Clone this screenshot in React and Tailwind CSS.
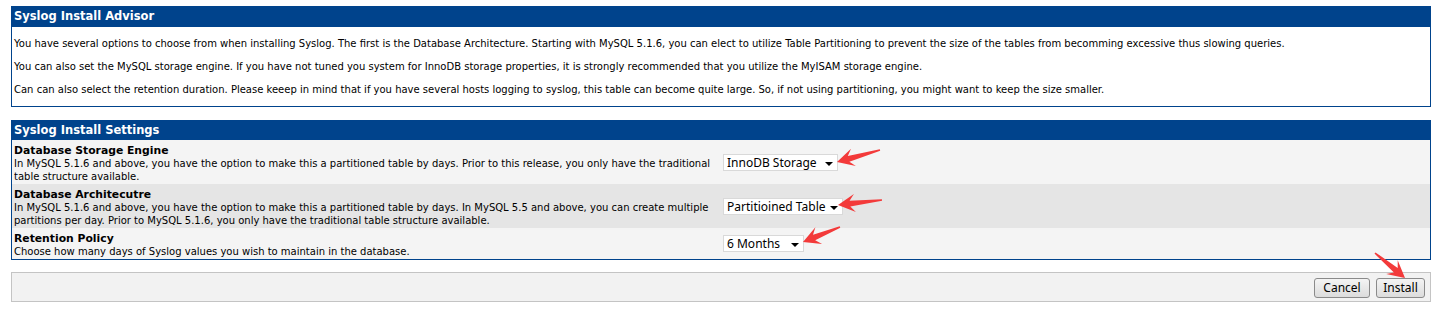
import React from 'react'

const arrowPoints = (x1, y1, x2, y2) => {
  const dx = x2 - x1
  const dy = y2 - y1
  const len = Math.hypot(dx, dy)
  const ux = dx / len
  const uy = dy / len
  const nx = -uy
  const ny = ux
  const head = 15
  const hw = 9
  const sw = 3
  const bx = x2 - ux * head
  const by = y2 - uy * head
  const pts = [
    [x1 + nx * 0.8, y1 + ny * 0.8],
    [bx + ux * 3 + nx * sw, by + uy * 3 + ny * sw],
    [bx - ux * 2 + nx * hw, by - uy * 2 + ny * hw],
    [x2, y2],
    [bx - ux * 2 - nx * hw, by - uy * 2 - ny * hw],
    [bx + ux * 3 - nx * sw, by + uy * 3 - ny * sw],
    [x1 - nx * 0.8, y1 - ny * 0.8],
  ]
  return pts.map((p) => p[0].toFixed(1) + ',' + p[1].toFixed(1)).join(' ')
}

const FakeSelect = ({ label, width }) => (
  <div
    className={`${width} h-[17px] bg-white border border-[#d9d9d9] flex items-center justify-between pl-[3px] pr-[4px] font-['Noto_Sans'] text-[12px] leading-none text-black`}
  >
    <span className="mt-px">{label}</span>
    <span className="w-0 h-0 border-l-[4px] border-r-[4px] border-t-[4px] border-l-transparent border-r-transparent border-t-black mt-[3px]"></span>
  </div>
)

const SettingRow = ({ title, lines, shade, children }) => (
  <div className={`flex ${shade}`}>
    <div className="w-1/2 pl-[2px] pt-[4px] pb-px leading-[13px] text-black">
      <div className="font-bold text-[10.8px]">{title}</div>
      {lines.map((l, i) => (
        <div key={i} className="whitespace-nowrap">{l}</div>
      ))}
    </div>
    <div className="w-1/2 pl-[2px] flex items-center">{children}</div>
  </div>
)

export default function App() {
  return (
    <div className="relative w-[1447px] h-[311px] bg-white font-['DejaVu_Sans'] text-[10px] text-black overflow-hidden">
      <div className="pt-[6px] pl-[11px] w-[1431px]">
        {/* advisor */}
        <div className="border border-[#00438c]">
          <div className="h-[20px] bg-[#00438c] text-white font-bold text-[11.5px] flex items-center pl-[2px]">
            Syslog Install Advisor
          </div>
          <div className="pl-[2px] pt-[10px] pb-[9px] flex flex-col gap-[9px] leading-[14px]">
            <p>You have several options to choose from when installing Syslog. The first is the Database Architecture. Starting with MySQL 5.1.6, you can elect to utilize Table Partitioning to prevent the size of the tables from becomming excessive thus slowing queries.</p>
            <p>You can also set the MySQL storage engine. If you have not tuned you system for InnoDB storage properties, it is strongly recommended that you utilize the MyISAM storage engine.</p>
            <p>Can can also select the retention duration. Please keeep in mind that if you have several hosts logging to syslog, this table can become quite large. So, if not using partitioning, you might want to keep the size smaller.</p>
          </div>
        </div>

        {/* settings */}
        <div className="mt-[13px] border border-[#00438c]">
          <div className="h-[19px] bg-[#00438c] text-white font-bold text-[11.5px] flex items-center pl-[2px]">
            Syslog Install Settings
          </div>
          <SettingRow
            title="Database Storage Engine"
            shade="bg-[#f4f4f4]"
            lines={[
              'In MySQL 5.1.6 and above, you have the option to make this a partitioned table by days. Prior to this release, you only have the traditional',
              'table structure available.',
            ]}
          >
            <FakeSelect label="InnoDB Storage" width="w-[115px]" />
          </SettingRow>
          <SettingRow
            title="Database Architecutre"
            shade="bg-[#e5e5e5]"
            lines={[
              'In MySQL 5.1.6 and above, you have the option to make this a partitioned table by days. In MySQL 5.5 and above, you can create multiple',
              'partitions per day. Prior to MySQL 5.1.6, you only have the traditional table structure available.',
            ]}
          >
            <FakeSelect label="Partitioined Table" width="w-[120px]" />
          </SettingRow>
          <SettingRow
            title="Retention Policy"
            shade="bg-[#f4f4f4]"
            lines={['Choose how many days of Syslog values you wish to maintain in the database.']}
          >
            <FakeSelect label="6 Months" width="w-[81px]" />
          </SettingRow>
        </div>

        {/* buttons */}
        <div className="mt-[12px] h-[30px] border border-[#c4c4c4] bg-[#f2f2f2] flex items-center justify-end gap-[6px] pr-[5px] pt-[2px] font-['Noto_Sans'] text-[12px]">
          <button className="w-[56px] h-[20px] rounded-[3px] border border-[#8a8a8a] bg-gradient-to-b from-[#f4f4f4] to-[#dcdcdc] leading-none text-black">
            Cancel
          </button>
          <button className="w-[49px] h-[20px] rounded-[3px] border border-[#8a8a8a] bg-gradient-to-b from-[#f4f4f4] to-[#dcdcdc] leading-none text-black">
            Install
          </button>
        </div>
      </div>

      {/* annotation arrows */}
      <svg className="absolute inset-0 pointer-events-none" width="1447" height="311">
        <polygon points={arrowPoints(880, 150, 837, 162)} fill="#f33a3a" />
        <polygon points={arrowPoints(882, 200, 838, 205)} fill="#f33a3a" />
        <polygon points={arrowPoints(840, 227, 803, 242)} fill="#f33a3a" />
        <polygon points={arrowPoints(1375, 253, 1405, 278)} fill="#f33a3a" />
      </svg>
    </div>
  )
}
